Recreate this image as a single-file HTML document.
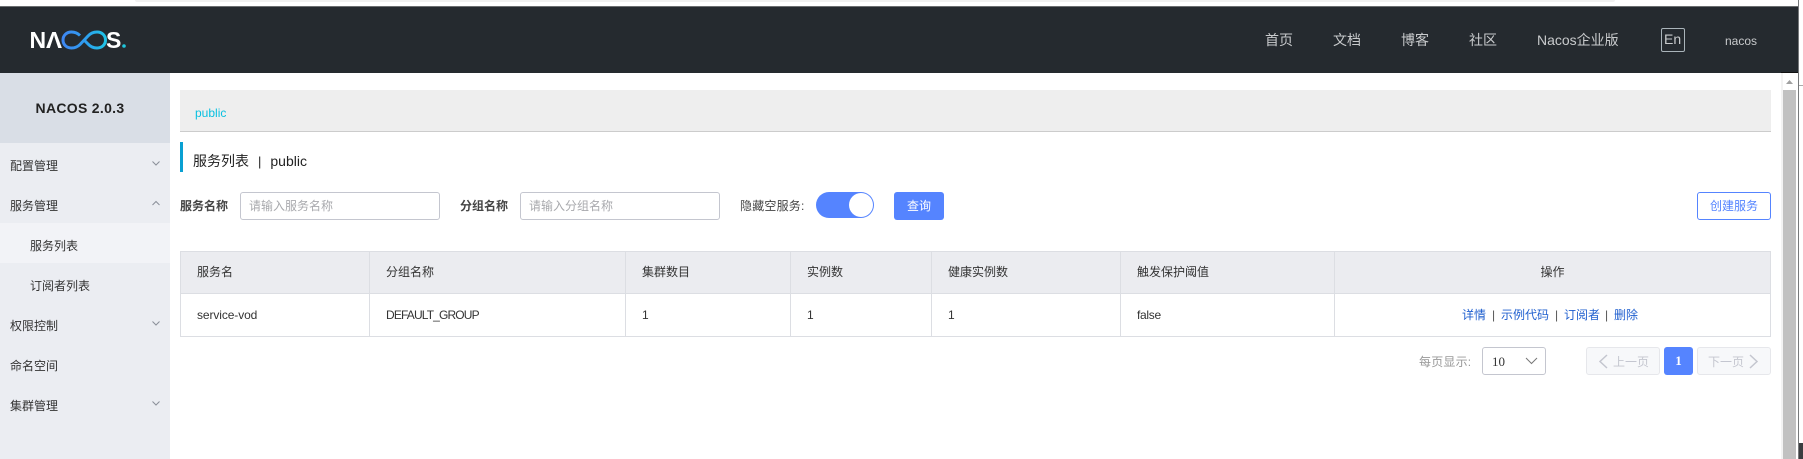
<!DOCTYPE html>
<html lang="zh-CN"><head><meta charset="utf-8"><title>Nacos</title>
<style>
html,body{margin:0;padding:0;width:1803px;height:459px;overflow:hidden;background:#fff}
body{position:relative;font-family:"Liberation Sans","Noto Sans CJK SC",sans-serif;font-size:12px;color:#333}
.a{position:absolute;white-space:nowrap}
.t{position:absolute;white-space:nowrap;line-height:20px;height:20px}
.box{position:absolute;box-sizing:border-box}
.nav{color:#c8cacc;font-size:14px}
.side{color:#333;font-size:12px}
.th{color:#333}
svg{position:absolute;overflow:visible}
</style></head><body>
<div class="box" style="left:135px;top:0;width:1480px;height:2px;background:#f1f1f1;border-radius:0 0 6px 6px"></div>
<div class="box" style="left:0;top:6px;width:1798px;height:1px;background:#6b6e70"></div>
<div class="box" style="left:0;top:7px;width:1798px;height:66px;background:#252a2f"></div>

<svg style="left:0;top:0" width="140" height="73" viewBox="0 0 140 73" role="img" aria-label="NACOS.">
<defs><linearGradient id="g" gradientUnits="userSpaceOnUse" x1="62" y1="0" x2="106" y2="0"><stop offset="0" stop-color="#3f86f2"/><stop offset=".5" stop-color="#2f9cf0"/><stop offset="1" stop-color="#1fc4e6"/></linearGradient></defs>
<text x="29.500" y="48" font-family="Liberation Sans" font-weight="700" font-size="23" fill="#fff">N</text>
<text x="46" y="48" font-family="Liberation Sans" font-weight="700" font-size="23" fill="#fff" textLength="16" lengthAdjust="spacingAndGlyphs">Λ</text>
<path d="M80 35.500C77.500 33 74.500 32 71.500 32 66.500 32 63 35.500 63 40 63 44.500 66.500 48 71.500 48 75 48 78 46.500 80 44.500L88 36C90 33.800 93 32 97 32 102 32 105.500 35.500 105.500 40 105.500 44.500 102 48 97 48 93 48 90 46.200 88 44L85 41" fill="none" stroke="url(#g)" stroke-width="3"/>
<text x="106" y="48" font-family="Liberation Sans" font-weight="700" font-size="23" fill="#fff">S</text>
<circle cx="124" cy="46" r="1.800" fill="#1fc6dc"/>
</svg>

<div class="t nav" style="left:1265px;top:30px">首页</div>
<div class="t nav" style="left:1333px;top:30px">文档</div>
<div class="t nav" style="left:1401px;top:30px">博客</div>
<div class="t nav" style="left:1469px;top:30px">社区</div>
<div class="t nav" style="left:1537px;top:30px">Nacos企业版</div>
<div class="box" style="left:1661px;top:28px;width:24px;height:24px;border:1px solid #aab4ba;border-radius:2px"></div>
<div class="t nav" style="left:1664px;top:29px">En</div>
<div class="t" style="left:1725px;top:31px;color:#c8cacc;font-size:12px">nacos</div>

<div class="box" style="left:0;top:73px;width:170px;height:386px;background:#ebedf2"></div>
<div class="box" style="left:0;top:73px;width:170px;height:70px;background:#d9dee6"></div>
<div class="t" style="left:0;top:98px;width:160px;text-align:center;font-size:14px;font-weight:700;color:#222;letter-spacing:.3px">NACOS 2.0.3</div>
<div class="box" style="left:0;top:223px;width:170px;height:40px;background:#f2f3f7"></div>
<div class="t side" style="left:10px;top:156px">配置管理</div>
<div class="t side" style="left:10px;top:196px">服务管理</div>
<div class="t side" style="left:30px;top:236px">服务列表</div>
<div class="t side" style="left:30px;top:276px">订阅者列表</div>
<div class="t side" style="left:10px;top:316px">权限控制</div>
<div class="t side" style="left:10px;top:356px">命名空间</div>
<div class="t side" style="left:10px;top:396px">集群管理</div>
<svg style="left:0;top:0" width="170" height="459" fill="none" stroke="#8a8f99" stroke-width="1">
<path d="M152.500 161.500l3.500 3.500 3.500-3.500M152.500 205l3.500-3.500 3.500 3.500M152.500 321.500l3.500 3.500 3.500-3.500M152.500 401.500l3.500 3.500 3.500-3.500"/>
</svg>

<div class="box" style="left:180px;top:90px;width:1591px;height:42px;background:#eee;border-bottom:1px solid #ccc"></div>
<div class="t" style="left:195px;top:103px;color:#09c0e0;font-size:12px">public</div>

<div class="box" style="left:180px;top:142px;width:3px;height:30px;background:#09a0d2"></div>
<div class="t" style="left:193px;top:151px;font-size:14px;color:#222">服务列表<span style="margin:0 9px;font-size:13px">|</span>public</div>

<div class="t" style="left:180px;top:196px;color:#444;font-weight:700">服务名称</div>
<div class="box" style="left:240px;top:192px;width:200px;height:28px;border:1px solid #c4c6cf;border-radius:3px"></div>
<div class="t" style="left:249px;top:196px;color:#a8a9ad">请输入服务名称</div>
<div class="t" style="left:460px;top:196px;color:#444;font-weight:700">分组名称</div>
<div class="box" style="left:520px;top:192px;width:200px;height:28px;border:1px solid #c4c6cf;border-radius:3px"></div>
<div class="t" style="left:529px;top:196px;color:#a8a9ad">请输入分组名称</div>
<div class="t" style="left:740px;top:196px;color:#444;letter-spacing:.2px">隐藏空服务:</div>
<div class="box" style="left:816px;top:192px;width:58px;height:26px;background:#5584ff;border-radius:13px"></div>
<div class="box" style="left:849px;top:193px;width:24px;height:24px;background:#fff;border-radius:50%"></div>
<div class="box" style="left:894px;top:192px;width:50px;height:28px;background:#5584ff;border-radius:3px;color:#fff;text-align:center;line-height:28px">查询</div>
<div class="box" style="left:1697px;top:192px;width:74px;height:28px;border:1px solid #5584ff;border-radius:3px;color:#5584ff;text-align:center;line-height:26px">创建服务</div>

<div class="box" style="left:180px;top:251px;width:1591px;height:86px;border:1px solid #dcdee3"></div>
<div class="box" style="left:181px;top:252px;width:1589px;height:42px;background:#ebecf0;border-bottom:1px solid #dcdee3"></div>
<div class="box" style="left:369px;top:251px;width:1px;height:86px;background:#dcdee3"></div>
<div class="box" style="left:625px;top:251px;width:1px;height:86px;background:#dcdee3"></div>
<div class="box" style="left:790px;top:251px;width:1px;height:86px;background:#dcdee3"></div>
<div class="box" style="left:931px;top:251px;width:1px;height:86px;background:#dcdee3"></div>
<div class="box" style="left:1120px;top:251px;width:1px;height:86px;background:#dcdee3"></div>
<div class="box" style="left:1334px;top:251px;width:1px;height:86px;background:#dcdee3"></div>

<div class="t th" style="left:197px;top:262px">服务名</div>
<div class="t th" style="left:386px;top:262px">分组名称</div>
<div class="t th" style="left:642px;top:262px">集群数目</div>
<div class="t th" style="left:807px;top:262px">实例数</div>
<div class="t th" style="left:948px;top:262px">健康实例数</div>
<div class="t th" style="left:1137px;top:262px">触发保护阈值</div>
<div class="t th" style="left:1335px;top:262px;width:435px;text-align:center">操作</div>

<div class="t" style="left:197px;top:305px;letter-spacing:-.1px">service-vod</div>
<div class="t" style="left:386px;top:305px;letter-spacing:-.85px">DEFAULT_GROUP</div>
<div class="t" style="left:642px;top:305px">1</div>
<div class="t" style="left:807px;top:305px">1</div>
<div class="t" style="left:948px;top:305px">1</div>
<div class="t" style="left:1137px;top:305px;letter-spacing:-.3px">false</div>
<div class="t" style="left:1462px;top:305px;color:#1f5fcf">详情</div>
<div class="t" style="left:1492px;top:305px;color:#555">|</div>
<div class="t" style="left:1501px;top:305px;color:#1f5fcf">示例代码</div>
<div class="t" style="left:1555px;top:305px;color:#555">|</div>
<div class="t" style="left:1564px;top:305px;color:#1f5fcf">订阅者</div>
<div class="t" style="left:1605px;top:305px;color:#555">|</div>
<div class="t" style="left:1614px;top:305px;color:#1f5fcf">删除</div>

<div class="t" style="left:1419px;top:352px;color:#999;letter-spacing:.2px">每页显示:</div>
<div class="box" style="left:1482px;top:347px;width:64px;height:28px;border:1px solid #c4c6cf;border-radius:3px"></div>
<div class="t" style="left:1492px;top:352px;color:#333;font-family:'Liberation Serif',serif;font-size:13px">10</div>
<svg style="left:0;top:0" width="1803" height="459" fill="none" stroke="#777" stroke-width="1">
<path d="M1526 358l5.500 5.500 5.500-5.500"/>
</svg>
<div class="box" style="left:1586px;top:347px;width:74px;height:28px;background:#f7f8fa;border:1px solid #e6e7eb;border-radius:3px"></div>
<div class="box" style="left:1664px;top:347px;width:29px;height:28px;background:#5584ff;border-radius:3px;color:#fff;text-align:center;line-height:28px;font-family:'Liberation Serif',serif;font-size:13px;font-weight:700">1</div>
<div class="box" style="left:1697px;top:347px;width:74px;height:28px;background:#f7f8fa;border:1px solid #e6e7eb;border-radius:3px"></div>
<div class="t" style="left:1613px;top:352px;color:#c4c6cf">上一页</div>
<div class="t" style="left:1708px;top:352px;color:#c4c6cf">下一页</div>
<svg style="left:0;top:0" width="1803" height="459" fill="none" stroke="#c4c6cf" stroke-width="1.500">
<path d="M1607 355l-7 6.500 7 6.500M1750 355l7 6.500-7 6.500"/>
</svg>

<div class="box" style="left:1781px;top:73px;width:17px;height:386px;background:#fff"></div>
<div class="box" style="left:1781px;top:72px;width:17px;height:1px;background:#111"></div>
<div class="box" style="left:1781px;top:73px;width:2px;height:386px;background:#f3f3f3"></div>
<div class="box" style="left:1783px;top:90px;width:13px;height:369px;background:#c1c1c1"></div>
<svg style="left:0;top:0" width="1803" height="459"><path d="M1786 84l3.500-4 3.500 4z" fill="#a0a0a0"/></svg>
<div class="box" style="left:1798px;top:0;width:1px;height:459px;background:#77797b"></div>
<div class="box" style="left:1799px;top:85px;width:4px;height:1px;background:#aaa"></div>
<div class="box" style="left:1799px;top:443px;width:4px;height:16px;background:#3a3d40"></div>
</body></html>
